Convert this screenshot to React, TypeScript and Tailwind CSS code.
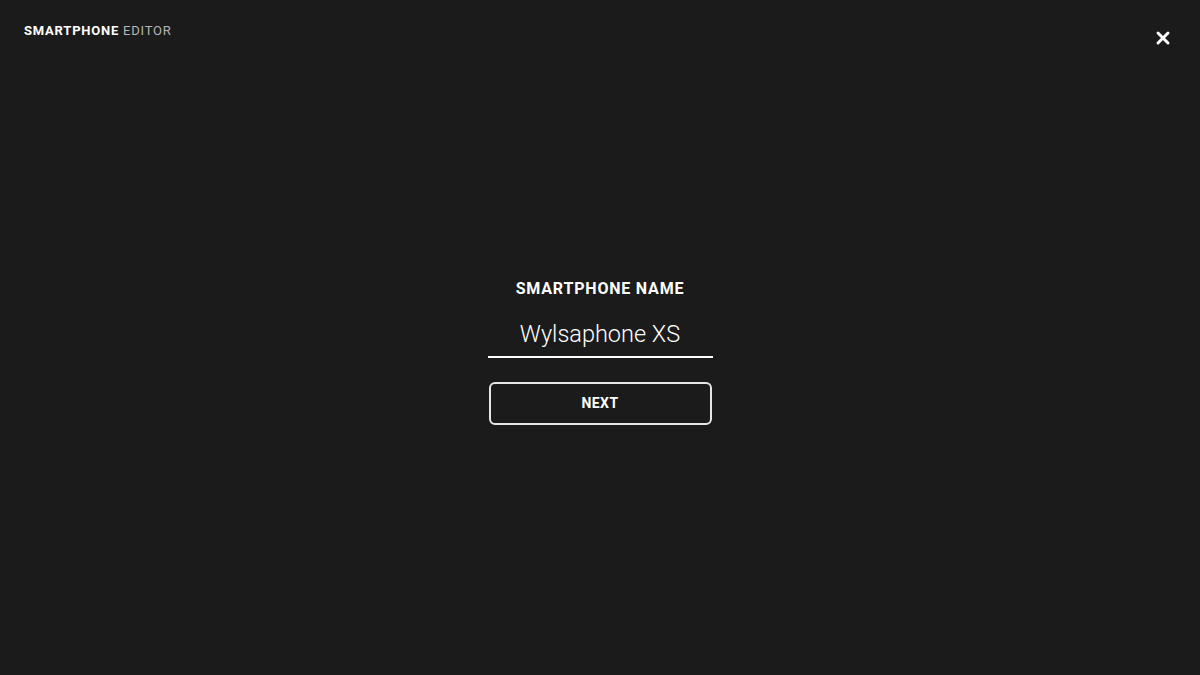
import { X } from "lucide-react";

export default function App() {
  return (
    <div className="min-h-screen w-full bg-[#1b1b1b] text-white font-['Roboto',sans-serif] flex flex-col">
      <header className="flex justify-between items-start px-6 h-[60px]">
        <div className="pt-[23px] text-[13px] leading-4 tracking-[0.06em]">
          <span className="font-bold">SMARTPHONE</span>{" "}
          <span className="text-[#b5b5b5]">EDITOR</span>
        </div>
        <button className="mt-[28px] mr-[3px] text-white">
          <X size={20} strokeWidth={3.5} />
        </button>
      </header>

      <main className="flex flex-col items-center pt-[219px]">
        <label className="text-[16px] leading-5 font-bold tracking-[0.05em]">SMARTPHONE NAME</label>
        <div className="mt-[21px] w-[225px] border-b-2 border-white flex justify-center pb-[8px]">
          <span className="text-[23.5px] leading-7 font-light">Wylsaphone XS</span>
        </div>
        <button className="mt-[24px] w-[223px] h-[43px] border-2 border-[#e6e6e6] rounded-[6px] text-[14px] font-bold tracking-[0.03em]">
          NEXT
        </button>
      </main>
    </div>
  );
}
